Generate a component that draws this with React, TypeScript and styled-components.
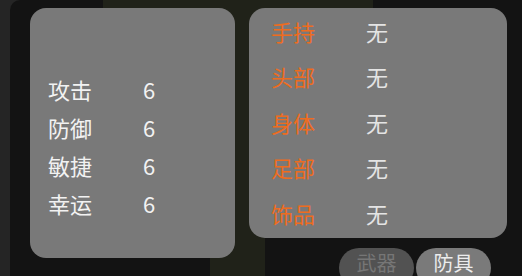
import styled, { createGlobalStyle } from "styled-components";

const GlobalStyle = createGlobalStyle`
  html, body {
    margin: 0;
    padding: 0;
    background: #252525;
    font-family: "Noto Sans CJK SC", "Noto Sans", sans-serif;
  }
`;

const Backdrop = styled.div`
  margin-left: 10px;
  height: 276px;
  overflow: hidden;
  border-top-left-radius: 10px;
  background-color: #131313;
  background-image:
    linear-gradient(#202219, #202219),
    linear-gradient(#202219, #202219);
  background-repeat: no-repeat;
  background-position: 93px 0, 200px 120px;
  background-size: 270px 120px, 55px 156px;
  display: flex;
  align-items: flex-start;
  gap: 14px;
  padding: 8px 0 0 20px;
  box-sizing: border-box;
`;

const Panel = styled.div<{ $h: number; $pad: string }>`
  background: #797979;
  border-radius: 16px;
  height: ${(p) => p.$h}px;
  padding: ${(p) => p.$pad};
  box-sizing: border-box;
`;

const StatsPanel = styled(Panel)`
  width: 205px;
`;

const Column = styled.div`
  width: 258px;
  display: flex;
  flex-direction: column;
  gap: 10px;
`;

const Row = styled.div<{ $h: number }>`
  display: flex;
  align-items: center;
  height: ${(p) => p.$h}px;
  font-size: 22px;
`;

const Label = styled.span<{ $color: string }>`
  width: 95px;
  color: ${(p) => p.$color};
`;

const Value = styled.span<{ $color: string }>`
  color: ${(p) => p.$color};
`;

const Tabs = styled.div`
  display: flex;
  gap: 2px;
  padding-left: 90px;
`;

const Tab = styled.button<{ $active?: boolean }>`
  width: 75px;
  height: 40px;
  border: none;
  border-radius: 20px;
  padding: 0 0 11px;
  font-family: inherit;
  font-size: 20px;
  background: ${(p) => (p.$active ? "#7a7a7a" : "#525252")};
  color: ${(p) => (p.$active ? "#ececec" : "#767676")};
`;

const stats = [
  ["攻击", "6"],
  ["防御", "6"],
  ["敏捷", "6"],
  ["幸运", "6"],
];

const slots = ["手持", "头部", "身体", "足部", "饰品"];

export default function App() {
  return (
    <>
      <GlobalStyle />
      <Backdrop>
        <StatsPanel $h={250} $pad="62px 0 0 18px">
          {stats.map(([name, v]) => (
            <Row key={name} $h={38}>
              <Label $color="#f2f2f2">{name}</Label>
              <Value $color="#f2f2f2">{v}</Value>
            </Row>
          ))}
        </StatsPanel>
        <Column>
          <Panel $h={230} $pad="0 0 0 22px">
            {slots.map((s) => (
              <Row key={s} $h={45.5}>
                <Label $color="#ee6c20">{s}</Label>
                <Value $color="#e4e4e4">无</Value>
              </Row>
            ))}
          </Panel>
          <Tabs>
            <Tab>武器</Tab>
            <Tab $active>防具</Tab>
          </Tabs>
        </Column>
      </Backdrop>
    </>
  );
}
